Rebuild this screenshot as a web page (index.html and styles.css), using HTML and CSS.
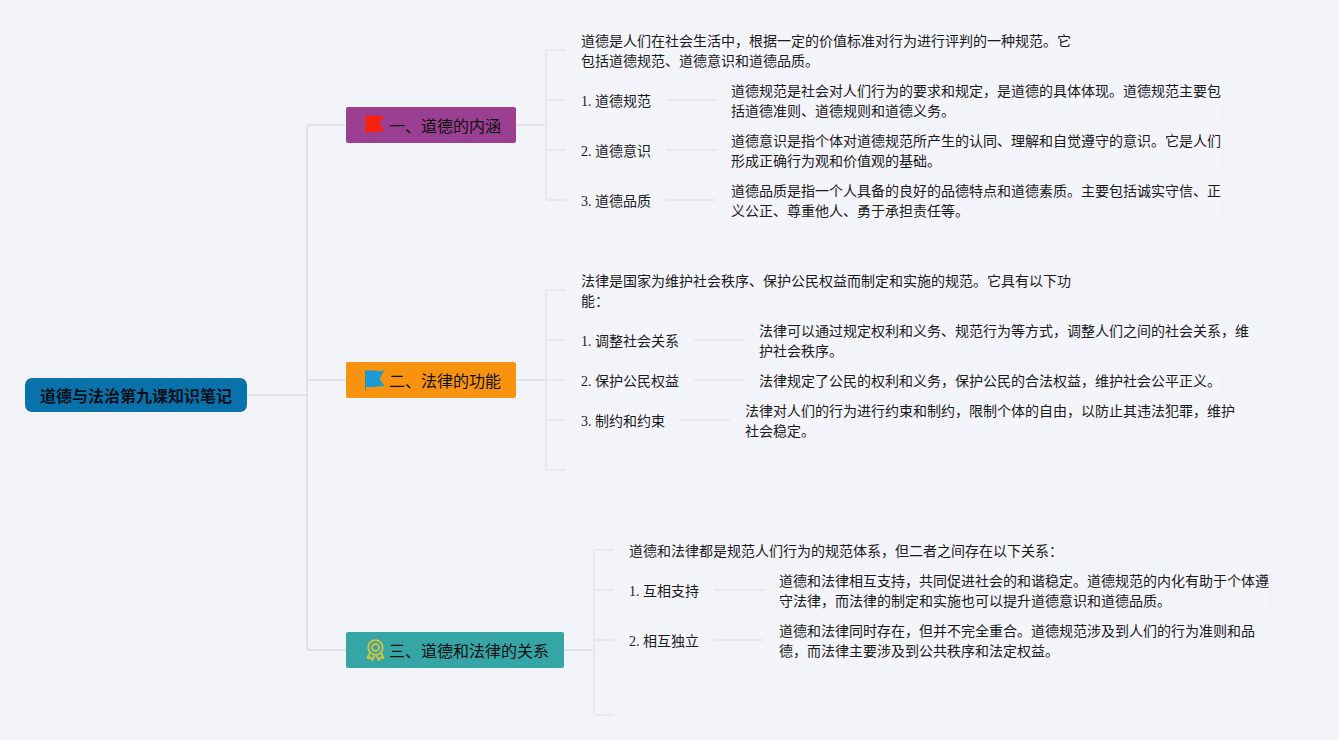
FILE: index.html
```html
<!DOCTYPE html>
<html lang="zh">
<head>
<meta charset="utf-8">
<title>道德与法治第九课知识笔记</title>
<link rel="stylesheet" href="styles.css">
</head>
<body>
<main class="map">
  <svg class="links" width="1339" height="740" viewBox="0 0 1339 740" fill="none">
    <g class="trunk">
      <path d="M247 395H307"/>
      <path d="M347 125H310Q307 125 307 128V647Q307 650 310 650H347"/>
      <path d="M307 380H347"/>
      <path d="M516 125H546"/>
      <path d="M516 380H546"/>
      <path d="M564 650H594"/>
    </g>
    <g class="twig">
      <path d="M566 50H549Q546 50 546 53V197Q546 200 549 200H566"/>
      <path d="M546 100H566M546 150H566"/>
      <path d="M666 100H716M666 150H716M666 200H716"/>
      <path d="M566 290H549Q546 290 546 293V467Q546 470 549 470H566"/>
      <path d="M546 340H566M546 380H566M546 420H566"/>
      <path d="M694 340H744M694 380H744M680 420H730"/>
      <path d="M614 550H597Q594 550 594 553V712Q594 715 597 715H614"/>
      <path d="M594 590H614M594 640H614"/>
      <path d="M714 590H764M714 640H764"/>
    </g>
  </svg>

  <div class="node root">道德与法治第九课知识笔记</div>

  <div class="node topic topic-a">
    <svg class="icon" viewBox="0 0 20 22"><path class="pole" d="M.5 1V21.500"/><path class="flag-red" d="M1 1.800Q6 .8 10 1.800T19.500 1.500L14.500 9.500L19.500 17.500Q14 17 10 17.800T1 17.800Z"/></svg>
    <span>一、道德的内涵</span>
  </div>
  <div class="node topic topic-b">
    <svg class="icon" viewBox="0 0 20 22"><path class="pole" d="M.5 1V21.500"/><path class="flag-blue" d="M1 1.800Q6 .8 10 1.800T19.500 1.500L14.500 9.500L19.500 17.500Q14 17 10 17.800T1 17.800Z"/></svg>
    <span>二、法律的功能</span>
  </div>
  <div class="node topic topic-c">
    <svg class="icon" viewBox="0 0 20 22" fill="none"><g class="medal"><circle cx="10.500" cy="8.500" r="7.300"/><circle cx="10.500" cy="8.500" r="3.500"/><path d="M5 14L2.500 19L5.500 18.500L7.200 21L9.500 16.500M16 14L18.500 19L15.500 18.500L13.800 21L11.500 16.500"/></g></svg>
    <span>三、道德和法律的关系</span>
  </div>

  <p class="node text n1">道德是人们在社会生活中，根据一定的价值标准对行为进行评判的一种规范。它<br>包括道德规范、道德意识和道德品质。</p>
  <p class="node text n2">1. 道德规范</p>
  <p class="node text n3">道德规范是社会对人们行为的要求和规定，是道德的具体体现。道德规范主要包<br>括道德准则、道德规则和道德义务。</p>
  <p class="node text n4">2. 道德意识</p>
  <p class="node text n5">道德意识是指个体对道德规范所产生的认同、理解和自觉遵守的意识。它是人们<br>形成正确行为观和价值观的基础。</p>
  <p class="node text n6">3. 道德品质</p>
  <p class="node text n7">道德品质是指一个人具备的良好的品德特点和道德素质。主要包括诚实守信、正<br>义公正、尊重他人、勇于承担责任等。</p>

  <p class="node text n8">法律是国家为维护社会秩序、保护公民权益而制定和实施的规范。它具有以下功<br>能：</p>
  <p class="node text n9">1. 调整社会关系</p>
  <p class="node text n10">法律可以通过规定权利和义务、规范行为等方式，调整人们之间的社会关系，维<br>护社会秩序。</p>
  <p class="node text n11">2. 保护公民权益</p>
  <p class="node text n12">法律规定了公民的权利和义务，保护公民的合法权益，维护社会公平正义。</p>
  <p class="node text n13">3. 制约和约束</p>
  <p class="node text n14">法律对人们的行为进行约束和制约，限制个体的自由，以防止其违法犯罪，维护<br>社会稳定。</p>

  <p class="node text n15">道德和法律都是规范人们行为的规范体系，但二者之间存在以下关系：</p>
  <p class="node text n16">1. 互相支持</p>
  <p class="node text n17">道德和法律相互支持，共同促进社会的和谐稳定。道德规范的内化有助于个体遵<br>守法律，而法律的制定和实施也可以提升道德意识和道德品质。</p>
  <p class="node text n18">2. 相互独立</p>
  <p class="node text n19">道德和法律同时存在，但并不完全重合。道德规范涉及到人们的行为准则和品<br>德，而法律主要涉及到公共秩序和法定权益。</p>
</main>
</body>
</html>
```
FILE: styles.css
```css
* { box-sizing: border-box; }
html, body { margin: 0; height: 100%; overflow: hidden; }
body {
  background: #f3f3fa;
  color: #111;
  font-family: "Liberation Serif", "Noto Sans CJK SC", serif;
}
.map { position: relative; width: 1339px; height: 740px; }
.links { position: absolute; left: 0; top: 0; }
.trunk path { stroke: #e2e2ea; stroke-width: 2; }
.twig path { stroke: #e8e8ef; stroke-width: 2; }

.node { position: absolute; margin: 0; white-space: nowrap; }

.root {
  left: 25px; top: 378px; width: 222px; height: 34px;
  display: flex; align-items: center; justify-content: center;
  background: #0a72ab; border-radius: 7px;
  font-size: 16px; font-weight: 700; color: #04101a;
}

.topic {
  left: 346px; height: 36px;
  display: flex; align-items: center; gap: 4px; padding-left: 19px;
  border-radius: 2px; font-size: 16px; color: #111;
}
.topic-a { top: 107px; width: 170px; background: #9b3f92; }
.topic-b { top: 362px; width: 170px; background: #f7930e; }
.topic-c { top: 632px; width: 218px; background: #35a5a5; }

.icon { width: 20px; height: 22px; flex: none; }
.pole { stroke: #2f8fa0; stroke-width: 1; }
.topic-a .pole { stroke: #e0332a; }
.flag-red { fill: #f5210f; }
.flag-blue { fill: #1c9ad6; }
.medal path, .medal circle { stroke: #d6c53a; stroke-width: 1.800; stroke-linejoin: round; }

.text { font-size: 14px; line-height: 20px; background: #f4f4fb; color: #1a1a1a; }
.n1 { left: 581px; top: 32px; }
.n2 { left: 581px; top: 92px; }
.n3 { left: 731px; top: 82px; }
.n4 { left: 581px; top: 142px; }
.n5 { left: 731px; top: 132px; }
.n6 { left: 581px; top: 192px; }
.n7 { left: 731px; top: 182px; }
.n8 { left: 581px; top: 272px; }
.n9 { left: 581px; top: 332px; }
.n10 { left: 759px; top: 322px; }
.n11 { left: 581px; top: 372px; }
.n12 { left: 759px; top: 372px; }
.n13 { left: 581px; top: 412px; }
.n14 { left: 745px; top: 402px; }
.n15 { left: 629px; top: 542px; }
.n16 { left: 629px; top: 582px; }
.n17 { left: 779px; top: 572px; }
.n18 { left: 629px; top: 632px; }
.n19 { left: 779px; top: 622px; }
```
